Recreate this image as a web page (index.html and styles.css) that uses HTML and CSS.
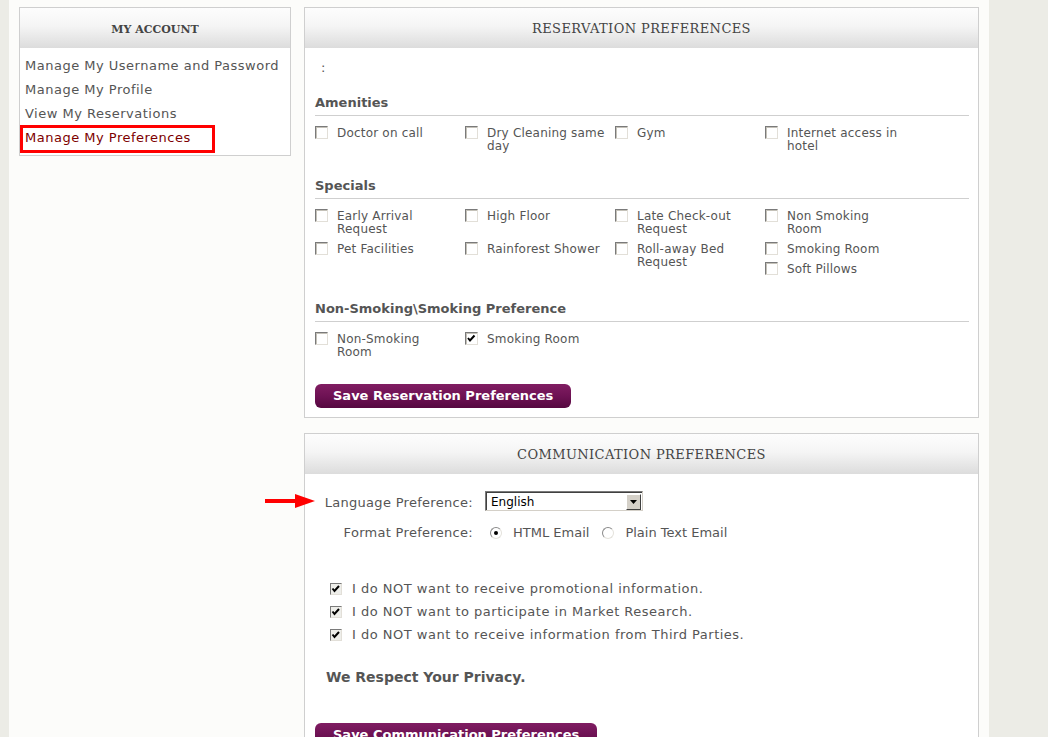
FILE: index.html
```html
<!DOCTYPE html>
<html lang="en">
<head>
<meta charset="utf-8">
<title>Manage My Preferences</title>
<link rel="stylesheet" href="styles.css">
</head>
<body>
<div class="page">
  <aside class="account">
    <div class="box-head account-head">MY ACCOUNT</div>
    <ul class="account-links">
      <li><a href="#">Manage My Username and Password</a></li>
      <li><a href="#">Manage My Profile</a></li>
      <li><a href="#">View My Reservations</a></li>
      <li class="current"><a href="#">Manage My Preferences</a><span class="mark"></span></li>
    </ul>
  </aside>

  <main class="main">
    <section class="panel">
      <div class="box-head panel-head">RESERVATION PREFERENCES</div>
      <div class="panel-body">
        <p class="colon">:</p>

        <div class="group">
          <h3 class="group-title">Amenities</h3>
          <div class="opts">
            <div class="col"><div class="opt"><span class="cb"></span><span class="label">Doctor on call</span></div></div>
            <div class="col"><div class="opt"><span class="cb"></span><span class="label">Dry Cleaning same<br>day</span></div></div>
            <div class="col"><div class="opt"><span class="cb"></span><span class="label">Gym</span></div></div>
            <div class="col"><div class="opt"><span class="cb"></span><span class="label">Internet access in<br>hotel</span></div></div>
          </div>
        </div>

        <div class="group">
          <h3 class="group-title">Specials</h3>
          <div class="opts">
            <div class="col">
              <div class="opt"><span class="cb"></span><span class="label">Early Arrival<br>Request</span></div>
              <div class="opt"><span class="cb"></span><span class="label">Pet Facilities</span></div>
            </div>
            <div class="col">
              <div class="opt opt-tall"><span class="cb"></span><span class="label">High Floor</span></div>
              <div class="opt"><span class="cb"></span><span class="label">Rainforest Shower</span></div>
            </div>
            <div class="col">
              <div class="opt"><span class="cb"></span><span class="label">Late Check-out<br>Request</span></div>
              <div class="opt"><span class="cb"></span><span class="label">Roll-away Bed<br>Request</span></div>
            </div>
            <div class="col">
              <div class="opt"><span class="cb"></span><span class="label">Non Smoking<br>Room</span></div>
              <div class="opt"><span class="cb"></span><span class="label">Smoking Room</span></div>
              <div class="opt"><span class="cb"></span><span class="label">Soft Pillows</span></div>
            </div>
          </div>
        </div>

        <div class="group">
          <h3 class="group-title">Non-Smoking\Smoking Preference</h3>
          <div class="opts">
            <div class="col"><div class="opt"><span class="cb"></span><span class="label">Non-Smoking<br>Room</span></div></div>
            <div class="col"><div class="opt"><span class="cb"><svg width="11" height="11" viewBox="0 0 11 11"><path d="M2 5 L4 7.5 L8.5 2.5" fill="none" stroke="#000" stroke-width="2"/></svg></span><span class="label">Smoking Room</span></div></div>
          </div>
        </div>

        <button class="btn btn-res" type="button">Save Reservation Preferences</button>
      </div>
    </section>

    <section class="panel">
      <div class="box-head panel-head">COMMUNICATION PREFERENCES</div>
      <div class="panel-body comm-body">
        <div class="form-row">
          <svg class="arrow" width="50" height="14" viewBox="0 0 50 14"><rect x="0" y="5" width="33" height="4" fill="#f00"/><polygon points="30,0 50,7 30,14" fill="#f00"/></svg>
          <span class="form-label">Language Preference:</span>
          <div class="select"><span class="select-value">English</span><span class="select-btn"><svg width="7" height="4" viewBox="0 0 7 4"><polygon points="0,0 7,0 3.5,4" fill="#000"/></svg></span></div>
        </div>
        <div class="form-row format-row">
          <span class="form-label">Format Preference:</span>
          <span class="radio checked"></span><span class="radio-label">HTML Email</span>
          <span class="radio radio-2"></span><span class="radio-label">Plain Text Email</span>
        </div>

        <ul class="checks">
          <li><span class="cb2"><svg width="10" height="10" viewBox="0 0 10 10"><path d="M1.5 4.5 L3.5 7 L8 2" fill="none" stroke="#000" stroke-width="2"/></svg></span>I do NOT want to receive promotional information.</li>
          <li><span class="cb2"><svg width="10" height="10" viewBox="0 0 10 10"><path d="M1.5 4.5 L3.5 7 L8 2" fill="none" stroke="#000" stroke-width="2"/></svg></span>I do NOT want to participate in Market Research.</li>
          <li><span class="cb2"><svg width="10" height="10" viewBox="0 0 10 10"><path d="M1.5 4.5 L3.5 7 L8 2" fill="none" stroke="#000" stroke-width="2"/></svg></span>I do NOT want to receive information from Third Parties.</li>
        </ul>

        <p class="privacy">We Respect Your Privacy.</p>

        <button class="btn btn-comm" type="button">Save Communication Preferences</button>
      </div>
    </section>
  </main>
</div>
</body>
</html>
```

FILE: styles.css
```css
html, body {
  margin: 0;
  padding: 0;
}

body {
  background: #ecece6;
  font-family: "DejaVu Sans", Verdana, sans-serif;
  color: #555;
}

.page {
  width: 980px;
  margin-left: 9px;
  min-height: 737px;
  box-sizing: border-box;
  background: #fcfcfa;
  display: flex;
  align-items: flex-start;
  gap: 13px;
  padding: 7px 10px 0 10px;
}

.box-head {
  height: 40px;
  display: flex;
  align-items: center;
  justify-content: center;
  background: linear-gradient(#fdfdfd 0%, #f5f5f5 45%, #dcdcdc 100%);
  color: #444;
  font-family: "DejaVu Serif", Georgia, serif;
}

/* left account box */
.account {
  width: 272px;
  box-sizing: border-box;
  border: 1px solid #cfcfcf;
  background: #fff;
}

.account-head {
  font-size: 11px;
  font-weight: bold;
  box-sizing: border-box;
  padding-top: 3px;
}

.account-links {
  list-style: none;
  margin: 0;
  padding: 6px 0 5px 0;
  font-size: 13px;
  line-height: 24px;
  letter-spacing: 0.5px;
}

.account-links li {
  position: relative;
  padding-left: 5px;
}

.account-links a {
  color: #555;
  text-decoration: none;
}

.account-links .current a {
  color: #7d0000;
}

.mark {
  position: absolute;
  left: 0;
  top: -1px;
  width: 195px;
  height: 28px;
  box-sizing: border-box;
  border: 3px solid #ff0000;
}

/* right column */
.main {
  width: 675px;
  display: flex;
  flex-direction: column;
  gap: 15px;
}

.panel {
  border: 1px solid #cfcfcf;
  background: #fff;
}

.panel-head {
  font-size: 13px;
  letter-spacing: 0.4px;
}

.panel-body {
  padding: 12px 9px 9px 10px;
}

.colon {
  margin: 0 0 0 6px;
  font-size: 13px;
  line-height: 16px;
}

.group {
  margin-top: 19px;
}

.group + .group {
  margin-top: 25px;
}

.group-title {
  margin: 0;
  font-size: 13px;
  font-weight: bold;
  line-height: 16px;
  padding-bottom: 4px;
  border-bottom: 1px solid #cfcfcf;
  color: #555;
}

.opts {
  margin-top: 10px;
  display: grid;
  grid-template-columns: repeat(4, 150px);
}

.col {
  display: flex;
  flex-direction: column;
  gap: 6px;
}

.opt {
  display: flex;
  align-items: flex-start;
  font-size: 12px;
  line-height: 13px;
  letter-spacing: 0.2px;
  white-space: nowrap;
}

.opt-tall {
  min-height: 27px;
}

.label {
  padding-top: 1px;
}

.cb {
  flex: none;
  width: 13px;
  height: 13px;
  box-sizing: border-box;
  margin-right: 9px;
  border: 1px solid;
  border-color: #7a7a7a #e2dfd8 #e2dfd8 #7a7a7a;
  box-shadow: inset 1px 1px 0 #c4c1b8;
  background: #fff;
  display: flex;
  align-items: center;
  justify-content: center;
}

.cb svg {
  display: block;
}

.btn {
  display: block;
  height: 24px;
  padding: 0 18px;
  border: none;
  border-radius: 6px;
  background: linear-gradient(#801d62 0%, #6e1254 50%, #560840 100%);
  color: #fff;
  font-family: "DejaVu Sans", Verdana, sans-serif;
  font-size: 13px;
  font-weight: bold;
  line-height: 24px;
}

.btn-res {
  margin-top: 25px;
}

/* communication */
.comm-body {
  padding-top: 17px;
  padding-bottom: 30px;
}

.form-row {
  position: relative;
  display: flex;
  align-items: flex-start;
  height: 20px;
  font-size: 13px;
  line-height: 16px;
}

.arrow {
  position: absolute;
  left: -50px;
  top: 3px;
}

.form-label {
  width: 158px;
  text-align: right;
  margin: 4px 12px 0 0;
  flex: none;
  letter-spacing: 0.3px;
}

.select {
  width: 158px;
  height: 20px;
  box-sizing: border-box;
  border: 1px solid;
  border-color: #7a7a7a #d4d0c8 #d4d0c8 #7a7a7a;
  box-shadow: inset 1px 1px 0 #404040;
  background: #fff;
  display: flex;
  align-items: center;
  justify-content: space-between;
  padding: 1px 1px 0 5px;
}

.select-value {
  color: #000;
  font-size: 12px;
}

.select-btn {
  width: 15px;
  height: 16px;
  box-sizing: border-box;
  background: #d4d0c8;
  border: 1px solid;
  border-color: #fff #404040 #404040 #fff;
  display: flex;
  align-items: center;
  justify-content: center;
}

.select-btn svg {
  display: block;
}

.format-row {
  margin-top: 14px;
  height: 16px;
  align-items: center;
}

.format-row .form-label {
  margin-top: 0;
}

.radio {
  flex: none;
  width: 12px;
  height: 12px;
  box-sizing: border-box;
  border-radius: 50%;
  border: 1px solid;
  border-color: #8a8a8a #e4e2dc #e4e2dc #8a8a8a;
  background: #fff;
  margin-left: 5px;
  margin-right: 11px;
  display: flex;
  align-items: center;
  justify-content: center;
}

.radio-2 {
  margin-left: 13px;
}

.radio.checked::after {
  content: "";
  width: 4px;
  height: 4px;
  border-radius: 50%;
  background: #000;
}

.radio-label {
  white-space: nowrap;
}

.checks {
  list-style: none;
  margin: 36px 0 0 0;
  padding: 0 0 0 15px;
  font-size: 13px;
  line-height: 23px;
  letter-spacing: 0.5px;
}

.checks li {
  display: flex;
  align-items: center;
}

.cb2 {
  flex: none;
  width: 12px;
  height: 12px;
  box-sizing: border-box;
  margin-right: 10px;
  border: 1px solid;
  border-color: #7a7a7a #e2dfd8 #e2dfd8 #7a7a7a;
  background: #eeeeea;
  display: flex;
  align-items: center;
  justify-content: center;
}

.cb2 svg {
  display: block;
}

.privacy {
  margin: 23px 0 0 11px;
  font-size: 14px;
  font-weight: bold;
  line-height: 16px;
}

.btn-comm {
  margin-top: 38px;
}
```
